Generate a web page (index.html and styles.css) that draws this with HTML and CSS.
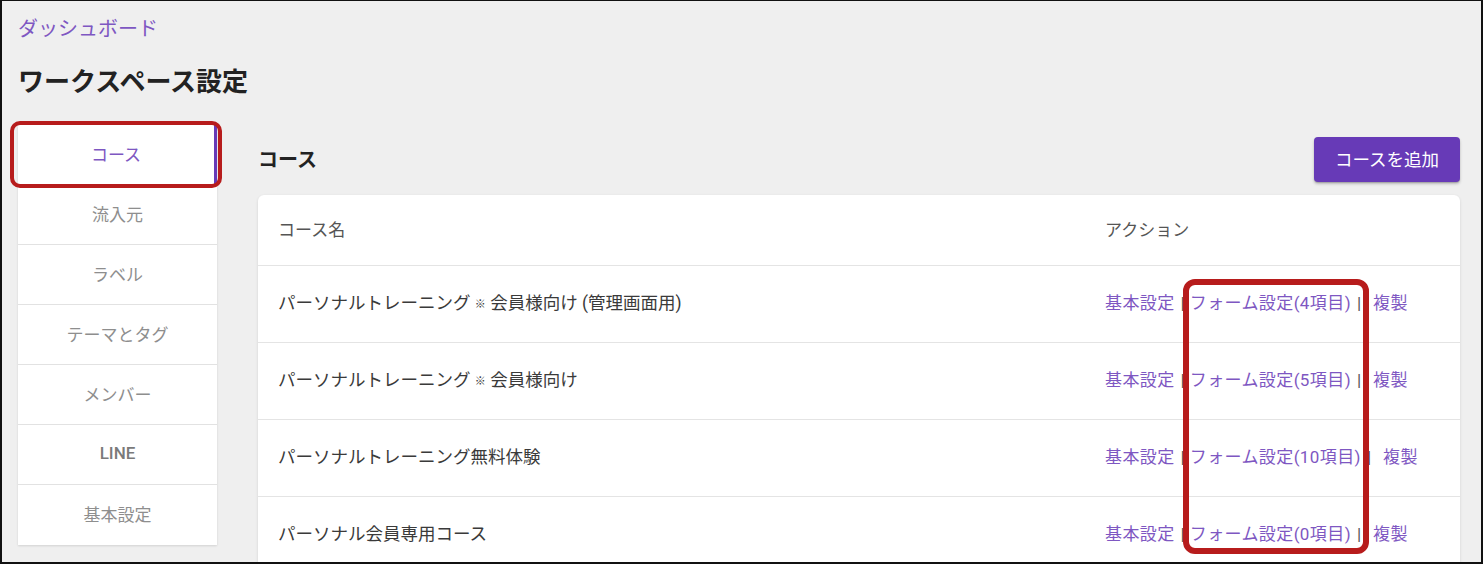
FILE: index.html
```html
<!DOCTYPE html>
<html lang="ja">
<head>
<meta charset="utf-8">
<title>ワークスペース設定</title>
<link rel="stylesheet" href="styles.css">
</head>
<body>
<div class="frame">
  <div class="page">
    <a class="crumb" href="#">ダッシュボード</a>
    <h1 class="title">ワークスペース設定</h1>
    <div class="layout">
      <nav class="side">
        <div class="side-item active">コース<span class="mark mark-side"></span></div>
        <div class="side-item">流入元</div>
        <div class="side-item">ラベル</div>
        <div class="side-item">テーマとタグ</div>
        <div class="side-item">メンバー</div>
        <div class="side-item latin">LINE</div>
        <div class="side-item">基本設定</div>
      </nav>
      <main class="main">
        <div class="main-head">
          <h2 class="heading">コース</h2>
          <button class="btn">コースを追加</button>
        </div>
        <div class="card">
          <div class="row head">
            <div class="cell">コース名</div>
            <div class="cell">アクション</div>
          </div>
          <div class="row">
            <div class="cell name">パーソナルトレーニング <span class="kome">※</span> 会員様向け (管理画面用)</div>
            <div class="cell actions"><a href="#">基本設定</a><span class="sep">|</span><a href="#">フォーム設定(4項目)</a><span class="sep">|</span><a class="dup" href="#">複製</a></div>
          </div>
          <div class="row">
            <div class="cell name">パーソナルトレーニング <span class="kome">※</span> 会員様向け</div>
            <div class="cell actions"><a href="#">基本設定</a><span class="sep">|</span><a href="#">フォーム設定(5項目)</a><span class="sep">|</span><a class="dup" href="#">複製</a></div>
          </div>
          <div class="row">
            <div class="cell name">パーソナルトレーニング無料体験</div>
            <div class="cell actions"><a href="#">基本設定</a><span class="sep">|</span><a href="#">フォーム設定(10項目)</a><span class="sep">|</span><a class="dup" href="#">複製</a></div>
          </div>
          <div class="row">
            <div class="cell name">パーソナル会員専用コース</div>
            <div class="cell actions"><a href="#">基本設定</a><span class="sep">|</span><a href="#">フォーム設定(0項目)</a><span class="sep">|</span><a class="dup" href="#">複製</a></div>
          </div>
          <span class="mark mark-col"></span>
        </div>
      </main>
    </div>
  </div>
</div>
</body>
</html>
```

FILE: styles.css
```css
* { box-sizing: border-box; }
html, body { margin: 0; padding: 0; }
body {
  font-family: Roboto, "Noto Sans CJK JP", sans-serif;
  background: #ffffff;
}
.frame {
  width: 1483px;
  height: 564px;
  border-style: solid;
  border-color: #111;
  border-width: 1px 2px 2px 2px;
  background: #efefef;
  overflow: hidden;
}
.page {
  padding: 14px 21px 0 16px;
}
.crumb {
  display: block;
  font-size: 20px;
  line-height: 28px;
  color: #7e57c2;
  text-decoration: none;
}
.title {
  margin: 23px 0 0 0;
  font-size: 26px;
  line-height: 32px;
  font-weight: 700;
  color: #222;
}
.layout {
  display: flex;
  gap: 41px;
  margin-top: 27px;
  align-items: flex-start;
}
.side {
  width: 199px;
  flex: none;
  background: #fff;
  box-shadow: 0 1px 2px rgba(0,0,0,0.12);
}
.side-item {
  position: relative;
  height: 60px;
  display: flex;
  align-items: center;
  justify-content: center;
  padding-bottom: 3px;
  font-size: 17px;
  color: #8e8e8e;
  border-bottom: 1px solid #e2e2e2;
}
.side-item:last-child { border-bottom: none; }
.side-item.latin { font-weight: 500; color: #7a7a7a; }
.side-item.active {
  color: #7e57c2;
  border-right: 3px solid #673ab7;
}
.main {
  flex: 1;
  min-width: 0;
}
.main-head {
  display: flex;
  justify-content: space-between;
  align-items: center;
  padding-top: 12px;
  height: 57px;
}
.heading {
  margin: 0 0 2px 0;
  font-size: 20px;
  font-weight: 700;
  color: #222;
}
.btn {
  height: 45px;
  width: 146px;
  border: none;
  border-radius: 4px;
  background: #673ab7;
  color: #fff;
  font-family: inherit;
  font-size: 17.5px;
  padding: 0 0 2px 0;
  box-shadow: 0 2px 3px rgba(0,0,0,0.22), 0 1px 1px rgba(0,0,0,0.14);
}
.card {
  position: relative;
  margin-top: 13px;
  background: #fff;
  border-radius: 6px;
  box-shadow: 0 1px 3px rgba(0,0,0,0.12);
}
.row {
  display: grid;
  grid-template-columns: 827px 1fr;
  height: 77px;
  align-items: center;
  padding-bottom: 6px;
  border-top: 1px solid #e4e4e4;
  font-size: 17px;
  color: #3a3a3a;
}
.row.head {
  height: 70px;
  padding-bottom: 4px;
  border-top: none;
  color: #555;
}
.cell {
  padding-left: 20px;
  white-space: nowrap;
}
.cell.name { font-size: 17.5px; }
.kome {
  font-size: 11px;
  vertical-align: 1px;
}
.actions a {
  color: #7e57c2;
  text-decoration: none;
  letter-spacing: 0.4px;
}
.sep {
  color: #555;
  margin: 0 5px 0 6px;
}
.actions .dup { margin-left: 7px; }
.mark {
  position: absolute;
  border-style: solid;
  border-color: #b71c1c;
  pointer-events: none;
}
.mark-side {
  left: -8px;
  top: -4px;
  width: 212px;
  height: 67px;
  border-width: 4px;
  border-radius: 10px;
}
.mark-col {
  left: 925px;
  top: 84px;
  width: 186px;
  height: 275px;
  border-width: 6px;
  border-radius: 12px;
}
```
